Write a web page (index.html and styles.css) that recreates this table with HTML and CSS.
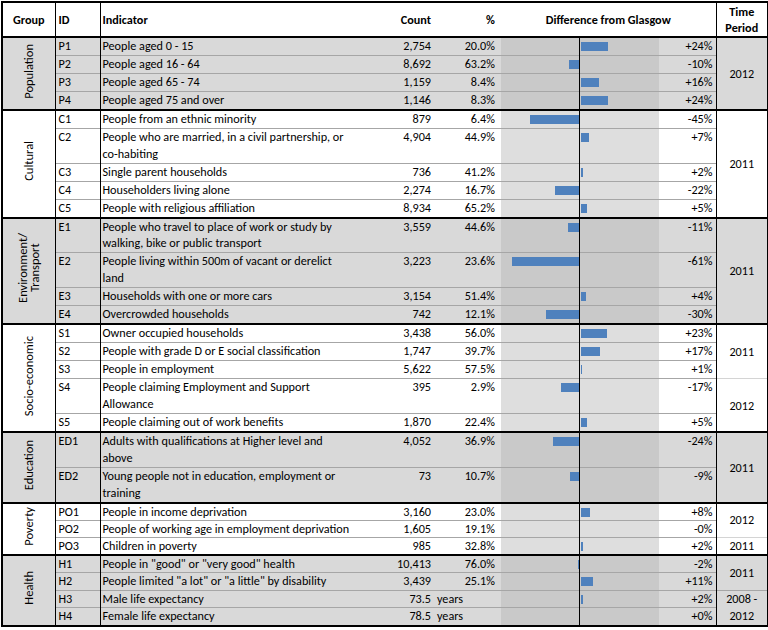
FILE: index.html
```html
<!DOCTYPE html>
<html>
<head>
<meta charset="utf-8">
<link rel="stylesheet" href="styles.css">
</head>
<body>
<div class="sheet">
<table>
<colgroup>
<col class="c-grp"><col class="c-id"><col class="c-ind"><col class="c-count"><col class="c-pct"><col class="c-chart"><col class="c-val"><col class="c-time">
</colgroup>
<thead>
<tr>
<th class="grp">Group</th><th class="id">ID</th><th class="ind">Indicator</th><th class="count">Count</th><th class="pct">%</th><th class="diff" colspan="2">Difference from Glasgow</th><th class="time">Time<br>Period</th>
</tr>
</thead>
<tbody class="gray">
<tr><td class="grp" rowspan="4"><div class="vlabel">Population</div></td><td class="id">P1</td><td class="ind">People aged 0 - 15</td><td class="count">2,754</td><td class="pct">20.0%</td><td class="chart"><div class="bars"><div class="neg"></div><div class="pos"><div class="bar" style="width:27px"></div></div></div></td><td class="val">+24%</td><td class="time" rowspan="4">2012</td></tr>
<tr><td class="id">P2</td><td class="ind">People aged 16 - 64</td><td class="count">8,692</td><td class="pct">63.2%</td><td class="chart"><div class="bars"><div class="neg"><div class="bar" style="width:11px"></div></div><div class="pos"></div></div></td><td class="val">-10%</td></tr>
<tr><td class="id">P3</td><td class="ind">People aged 65 - 74</td><td class="count">1,159</td><td class="pct">8.4%</td><td class="chart"><div class="bars"><div class="neg"></div><div class="pos"><div class="bar" style="width:18px"></div></div></div></td><td class="val">+16%</td></tr>
<tr><td class="id">P4</td><td class="ind">People aged 75 and over</td><td class="count">1,146</td><td class="pct">8.3%</td><td class="chart"><div class="bars"><div class="neg"></div><div class="pos"><div class="bar" style="width:27px"></div></div></div></td><td class="val">+24%</td></tr>
</tbody>
<tbody class="white">
<tr><td class="grp" rowspan="5"><div class="vlabel">Cultural</div></td><td class="id">C1</td><td class="ind">People from an ethnic minority</td><td class="count">879</td><td class="pct">6.4%</td><td class="chart"><div class="bars"><div class="neg"><div class="bar" style="width:50px"></div></div><div class="pos"></div></div></td><td class="val">-45%</td><td class="time" rowspan="5">2011</td></tr>
<tr><td class="id">C2</td><td class="ind">People who are married, in a civil partnership, or<br>co-habiting</td><td class="count">4,904</td><td class="pct">44.9%</td><td class="chart"><div class="bars"><div class="neg"></div><div class="pos"><div class="bar" style="width:8px"></div></div></div></td><td class="val">+7%</td></tr>
<tr><td class="id">C3</td><td class="ind">Single parent households</td><td class="count">736</td><td class="pct">41.2%</td><td class="chart"><div class="bars"><div class="neg"></div><div class="pos"><div class="bar" style="width:2px"></div></div></div></td><td class="val">+2%</td></tr>
<tr><td class="id">C4</td><td class="ind">Householders living alone</td><td class="count">2,274</td><td class="pct">16.7%</td><td class="chart"><div class="bars"><div class="neg"><div class="bar" style="width:25px"></div></div><div class="pos"></div></div></td><td class="val">-22%</td></tr>
<tr><td class="id">C5</td><td class="ind">People with religious affiliation</td><td class="count">8,934</td><td class="pct">65.2%</td><td class="chart"><div class="bars"><div class="neg"></div><div class="pos"><div class="bar" style="width:6px"></div></div></div></td><td class="val">+5%</td></tr>
</tbody>
<tbody class="gray">
<tr><td class="grp" rowspan="4"><div class="vlabel">Environment/<br>Transport</div></td><td class="id">E1</td><td class="ind">People who travel to place of work or study by<br>walking, bike or public transport</td><td class="count">3,559</td><td class="pct">44.6%</td><td class="chart"><div class="bars"><div class="neg"><div class="bar" style="width:12px"></div></div><div class="pos"></div></div></td><td class="val">-11%</td><td class="time" rowspan="4">2011</td></tr>
<tr><td class="id">E2</td><td class="ind">People living within 500m of vacant or derelict<br>land</td><td class="count">3,223</td><td class="pct">23.6%</td><td class="chart"><div class="bars"><div class="neg"><div class="bar" style="width:68px"></div></div><div class="pos"></div></div></td><td class="val">-61%</td></tr>
<tr><td class="id">E3</td><td class="ind">Households with one or more cars</td><td class="count">3,154</td><td class="pct">51.4%</td><td class="chart"><div class="bars"><div class="neg"></div><div class="pos"><div class="bar" style="width:5px"></div></div></div></td><td class="val">+4%</td></tr>
<tr><td class="id">E4</td><td class="ind">Overcrowded households</td><td class="count">742</td><td class="pct">12.1%</td><td class="chart"><div class="bars"><div class="neg"><div class="bar" style="width:34px"></div></div><div class="pos"></div></div></td><td class="val">-30%</td></tr>
</tbody>
<tbody class="white">
<tr><td class="grp" rowspan="5"><div class="vlabel">Socio-economic</div></td><td class="id">S1</td><td class="ind">Owner occupied households</td><td class="count">3,438</td><td class="pct">56.0%</td><td class="chart"><div class="bars"><div class="neg"></div><div class="pos"><div class="bar" style="width:26px"></div></div></div></td><td class="val">+23%</td><td class="time" rowspan="3">2011</td></tr>
<tr><td class="id">S2</td><td class="ind">People with grade D or E social classification</td><td class="count">1,747</td><td class="pct">39.7%</td><td class="chart"><div class="bars"><div class="neg"></div><div class="pos"><div class="bar" style="width:19px"></div></div></div></td><td class="val">+17%</td></tr>
<tr><td class="id">S3</td><td class="ind">People in employment</td><td class="count">5,622</td><td class="pct">57.5%</td><td class="chart"><div class="bars"><div class="neg"></div><div class="pos"><div class="bar" style="width:1px"></div></div></div></td><td class="val">+1%</td></tr>
<tr><td class="id">S4</td><td class="ind">People claiming Employment and Support<br>Allowance</td><td class="count">395</td><td class="pct">2.9%</td><td class="chart"><div class="bars"><div class="neg"><div class="bar" style="width:19px"></div></div><div class="pos"></div></div></td><td class="val">-17%</td><td class="time" rowspan="2">2012</td></tr>
<tr><td class="id">S5</td><td class="ind">People claiming out of work benefits</td><td class="count">1,870</td><td class="pct">22.4%</td><td class="chart"><div class="bars"><div class="neg"></div><div class="pos"><div class="bar" style="width:6px"></div></div></div></td><td class="val">+5%</td></tr>
</tbody>
<tbody class="gray">
<tr><td class="grp" rowspan="2"><div class="vlabel">Education</div></td><td class="id">ED1</td><td class="ind">Adults with qualifications at Higher level and<br>above</td><td class="count">4,052</td><td class="pct">36.9%</td><td class="chart"><div class="bars"><div class="neg"><div class="bar" style="width:27px"></div></div><div class="pos"></div></div></td><td class="val">-24%</td><td class="time" rowspan="2">2011</td></tr>
<tr><td class="id">ED2</td><td class="ind">Young people not in education, employment or<br>training</td><td class="count">73</td><td class="pct">10.7%</td><td class="chart"><div class="bars"><div class="neg"><div class="bar" style="width:10px"></div></div><div class="pos"></div></div></td><td class="val">-9%</td></tr>
</tbody>
<tbody class="white short">
<tr><td class="grp" rowspan="3"><div class="vlabel">Poverty</div></td><td class="id">PO1</td><td class="ind">People in income deprivation</td><td class="count">3,160</td><td class="pct">23.0%</td><td class="chart"><div class="bars"><div class="neg"></div><div class="pos"><div class="bar" style="width:9px"></div></div></div></td><td class="val">+8%</td><td class="time" rowspan="2">2012</td></tr>
<tr><td class="id">PO2</td><td class="ind">People of working age in employment deprivation</td><td class="count">1,605</td><td class="pct">19.1%</td><td class="chart"><div class="bars"><div class="neg"></div><div class="pos"></div></div></td><td class="val">-0%</td></tr>
<tr><td class="id">PO3</td><td class="ind">Children in poverty</td><td class="count">985</td><td class="pct">32.8%</td><td class="chart"><div class="bars"><div class="neg"></div><div class="pos"><div class="bar" style="width:2px"></div></div></div></td><td class="val">+2%</td><td class="time">2011</td></tr>
</tbody>
<tbody class="gray tight">
<tr><td class="grp" rowspan="4"><div class="vlabel">Health</div></td><td class="id">H1</td><td class="ind">People in "good" or "very good" health</td><td class="count">10,413</td><td class="pct">76.0%</td><td class="chart"><div class="bars"><div class="neg"><div class="bar" style="width:2px"></div></div><div class="pos"></div></div></td><td class="val">-2%</td><td class="time" rowspan="2">2011</td></tr>
<tr><td class="id">H2</td><td class="ind">People limited "a lot" or "a little" by disability</td><td class="count">3,439</td><td class="pct">25.1%</td><td class="chart"><div class="bars"><div class="neg"></div><div class="pos"><div class="bar" style="width:12px"></div></div></div></td><td class="val">+11%</td></tr>
<tr><td class="id">H3</td><td class="ind">Male life expectancy</td><td class="count">73.5</td><td class="pct unit">years</td><td class="chart"><div class="bars"><div class="neg"></div><div class="pos"><div class="bar" style="width:2px"></div></div></div></td><td class="val">+2%</td><td class="time" rowspan="2">2008 - 2012</td></tr>
<tr><td class="id">H4</td><td class="ind">Female life expectancy</td><td class="count">78.5</td><td class="pct unit">years</td><td class="chart"><div class="bars"><div class="neg"></div><div class="pos"></div></div></td><td class="val">+0%</td></tr>
</tbody>
</table>
<div class="axis"></div>
</div>
</body>
</html>
```

FILE: styles.css
```css
html, body {
  margin: 0;
  padding: 0;
  background: #fff;
}
body {
  font-family: Calibri, Carlito, Lato, "Open Sans", sans-serif;
  font-size: 12.2px;
  color: #000;
}
.sheet {
  position: relative;
  width: 768px;
  padding: 1px 0 0 1px;
  box-sizing: border-box;
}
table {
  border-collapse: collapse;
  table-layout: fixed;
  width: 766px;
  border: 2px solid #000;
}
.c-grp { width: 53px; }
.c-id { width: 45px; }
.c-ind { width: 252px; }
.c-count { width: 81px; }
.c-pct { width: 68px; }
.c-chart { width: 158px; }
.c-val { width: 57px; }
.c-time { width: 52px; }

th {
  height: 33px;
  padding: 0;
  font-weight: bold;
  line-height: 16px;
  vertical-align: middle;
  border-bottom: 2px solid #000;
  white-space: nowrap;
}
td {
  padding: 0;
  line-height: 16.95px;
  vertical-align: top;
  border-top: 1px solid #a6a6a6;
  white-space: nowrap;
}
tbody {
  border-top: 2px solid #000;
}
tbody.short td {
  line-height: 15.9px;
}
tbody.tight td {
  line-height: 16.5px;
}
.gray td {
  background: #d9d9d9;
}
.white td {
  background: #fff;
}
.white td.chart {
  background: #dedede;
}
.gray td.chart {
  background: #c9c9c9;
}
.grp {
  text-align: center;
  vertical-align: middle;
  border-right: 1px solid #000;
}
th.grp { text-align: center; }
.id {
  text-align: left;
  padding-left: 3px;
  border-right: 1px solid #000;
}
.ind {
  text-align: left;
  padding-left: 2px;
}
.count {
  text-align: right;
  padding-right: 2px;
}
.pct {
  text-align: right;
  padding-right: 6px;
}
.pct.unit {
  text-align: left;
  padding-left: 4px;
  padding-right: 0;
}
.diff {
  text-align: center;
  border-right: 1px solid #000;
}
.val {
  text-align: right;
  padding-right: 3px;
  border-right: 1px solid #000;
}
td.time {
  text-align: center;
  vertical-align: middle;
  line-height: 15px;
  white-space: normal;
}
th.time {
  line-height: 16px;
}
.white td.time {
  border-top-color: #d4d4d4;
}
.vlabel {
  display: inline-block;
  writing-mode: vertical-rl;
  transform: rotate(180deg);
  font-size: 12.5px;
  line-height: 12px;
  text-align: center;
}
.bars {
  display: flex;
  height: 16px;
}
.neg {
  width: 79px;
  display: flex;
  justify-content: flex-end;
}
.pos {
  width: 79px;
  display: flex;
  padding-left: 1px;
}
.bar {
  height: 9px;
  margin-top: 4px;
  background: #4f81bd;
}
.axis {
  position: absolute;
  left: 579px;
  top: 36px;
  bottom: 1px;
  width: 1px;
  background: #000;
}
```
